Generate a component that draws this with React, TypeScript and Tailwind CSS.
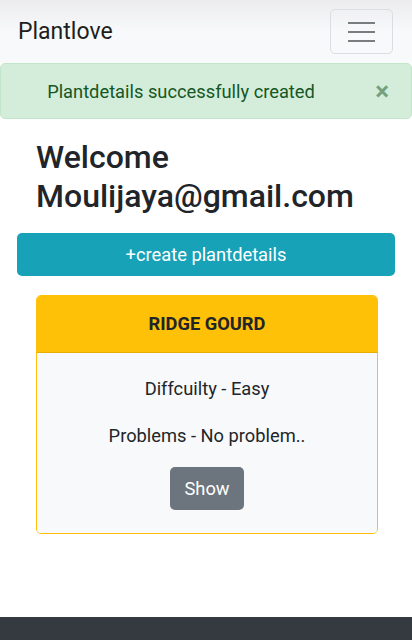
export default function App() {
  return (
    <div className="min-h-[640px] flex flex-col bg-white font-['Roboto',sans-serif] text-[#212529]">
      {/* Navbar */}
      <nav className="h-[63px] bg-[#f8f9fa] flex items-center justify-between pl-[18px] pr-[19px] bg-gradient-to-b from-[#ececee] via-[#f8f9fa] to-[#f8f9fa]">
        <span className="text-[23px] leading-none text-[#1d1f21]">Plantlove</span>
        <button className="w-[63px] h-[45px] border border-[#dcdde0] rounded-[5px] flex flex-col items-center justify-center gap-[7px]">
          <span className="block w-[27px] h-[2px] bg-[#7a7c7f]" />
          <span className="block w-[27px] h-[2px] bg-[#7a7c7f]" />
          <span className="block w-[27px] h-[2px] bg-[#7a7c7f]" />
        </button>
      </nav>

      {/* Alert */}
      <div className="relative h-[56px] bg-[#d4edda] border border-[#c3e6cb] rounded-[5px] flex items-center justify-center pl-[22px] pr-[72px] pt-[2px]">
        <span className="text-[18.3px] text-[#155724]">Plantdetails successfully created</span>
        <button className="absolute right-[22px] top-1/2 -translate-y-1/2 text-[#155724] opacity-50 text-[26px] font-bold leading-none">
          ×
        </button>
      </div>

      {/* Content */}
      <div className="pt-[19px]">
        <h2 className="px-[36px] text-[32px] leading-[39px] font-medium text-[#212529]">
          Welcome
          <br />
          Moulijaya@gmail.com
        </h2>

        <div className="px-[17px] mt-[17px]">
          <button className="w-full h-[43px] bg-[#17a2b8] rounded-[5px] text-white text-[18.3px]">
            +create plantdetails
          </button>
        </div>

        <div className="ml-[36px] mr-[34px] mt-[19px] border border-[#ffc107] rounded-[5px] overflow-hidden">
          <div className="h-[57px] bg-[#ffc107] border-b border-[#e5ad06] flex items-center justify-center">
            <span className="text-[18.3px] font-bold text-[#212529]">RIDGE GOURD</span>
          </div>
          <div className="bg-[#f8f9fa] flex flex-col items-center pt-[24px] pb-[23px]">
            <p className="text-[18.3px] leading-[24px]">Diffcuilty - Easy</p>
            <p className="text-[18.3px] leading-[24px] mt-[23px]">Problems - No problem..</p>
            <button className="mt-[19px] w-[74px] h-[43px] bg-[#6c757d] rounded-[5px] text-white text-[18.3px]">
              Show
            </button>
          </div>
        </div>
      </div>

      {/* Footer */}
      <footer className="mt-auto h-[23px] bg-[#343a40]" />
    </div>
  );
}
